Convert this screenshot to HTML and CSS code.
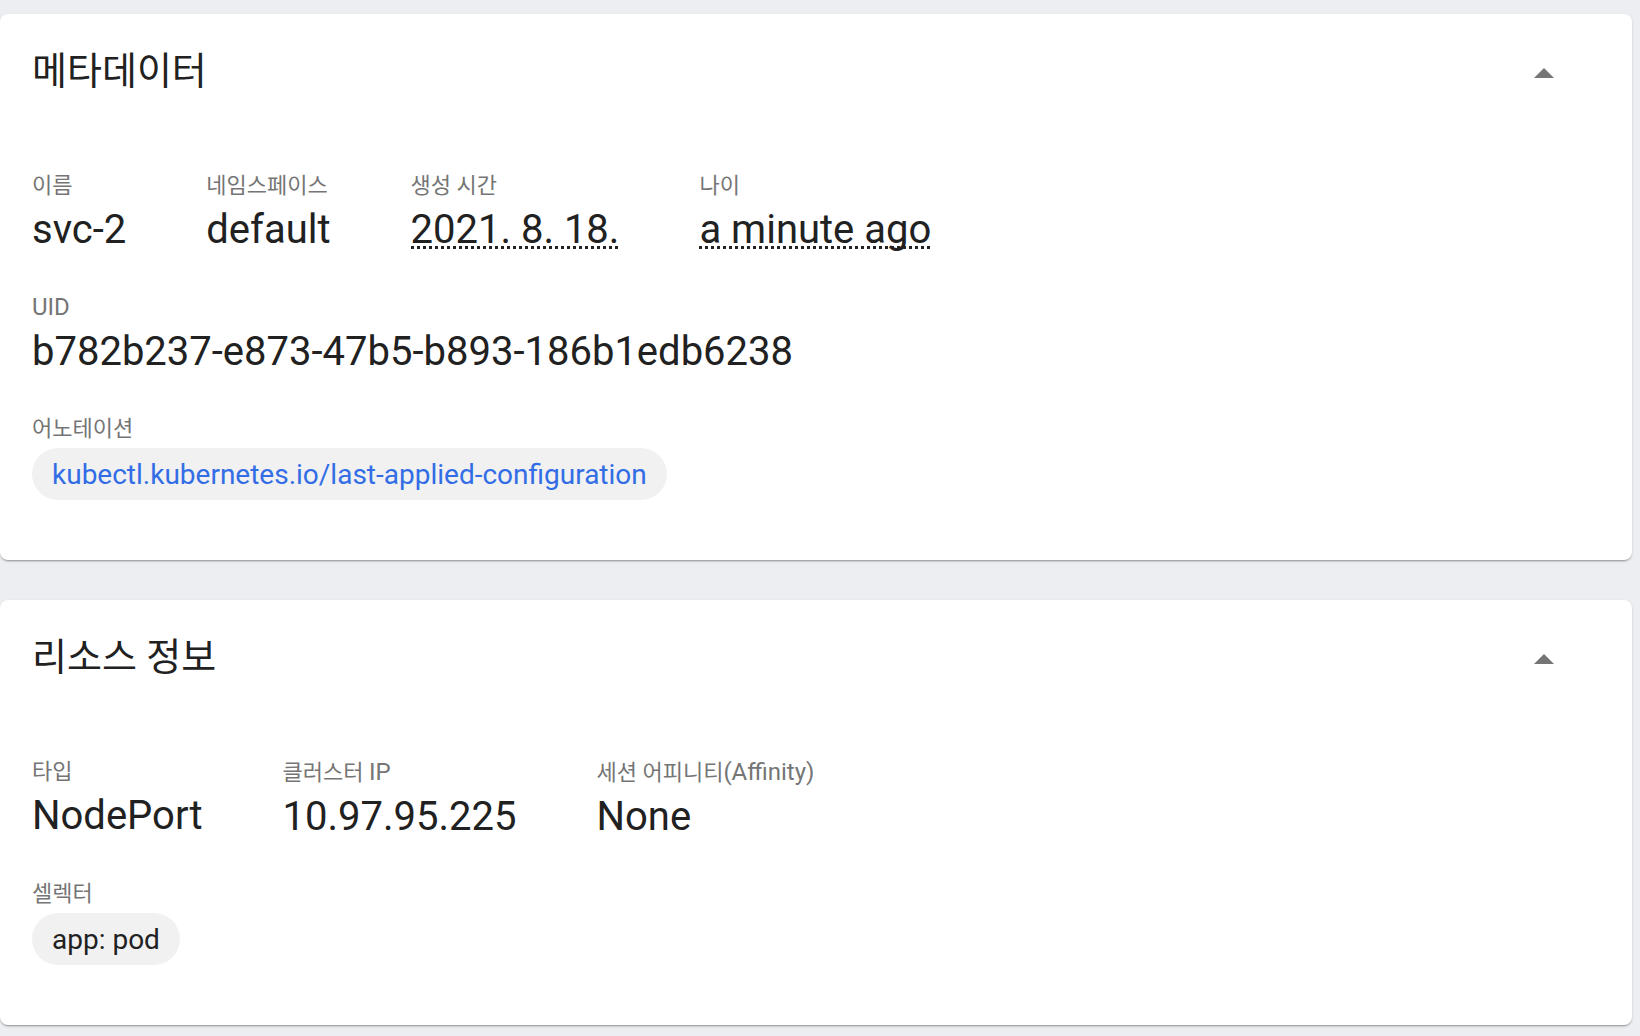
FILE: index.html
```html
<!DOCTYPE html>
<html lang="ko">
<head>
<meta charset="utf-8">
<title>svc-2</title>
<link rel="stylesheet" href="styles.css">
</head>
<body>
<main class="page">
  <section class="card">
    <header class="card-header">
      <h2 class="card-title">메타데이터</h2>
      <button class="toggle" type="button" aria-label="접기">
        <svg viewBox="0 0 24 24" width="48" height="48"><path d="M7 14l5-5 5 5z"/></svg>
      </button>
    </header>
    <div class="card-body">
      <div class="prop-row">
        <div class="prop">
          <div class="label">이름</div>
          <div class="value">svc-2</div>
        </div>
        <div class="prop">
          <div class="label">네임스페이스</div>
          <div class="value">default</div>
        </div>
        <div class="prop">
          <div class="label">생성 시간</div>
          <div class="value"><span class="dotted">2021. 8. 18.</span></div>
        </div>
        <div class="prop">
          <div class="label">나이</div>
          <div class="value"><span class="dotted">a minute ago</span></div>
        </div>
      </div>
      <div class="prop-row">
        <div class="prop">
          <div class="label"><span class="latin">UID</span></div>
          <div class="value">b782b237-e873-47b5-b893-186b1edb6238</div>
        </div>
      </div>
      <div class="prop-row">
        <div class="prop">
          <div class="label">어노테이션</div>
          <div class="chips">
            <span class="chip chip-link">kubectl.kubernetes.io/last-applied-configuration</span>
          </div>
        </div>
      </div>
    </div>
  </section>

  <section class="card">
    <header class="card-header">
      <h2 class="card-title">리소스 정보</h2>
      <button class="toggle" type="button" aria-label="접기">
        <svg viewBox="0 0 24 24" width="48" height="48"><path d="M7 14l5-5 5 5z"/></svg>
      </button>
    </header>
    <div class="card-body">
      <div class="prop-row">
        <div class="prop">
          <div class="label">타입</div>
          <div class="value">NodePort</div>
        </div>
        <div class="prop">
          <div class="label">클러스터 <span class="latin">IP</span></div>
          <div class="value">10.97.95.225</div>
        </div>
        <div class="prop">
          <div class="label">세션 어피니티<span class="latin">(Affinity)</span></div>
          <div class="value">None</div>
        </div>
      </div>
      <div class="prop-row">
        <div class="prop">
          <div class="label">셀렉터</div>
          <div class="chips">
            <span class="chip">app: pod</span>
          </div>
        </div>
      </div>
    </div>
  </section>
</main>
</body>
</html>
```

FILE: styles.css
```css
html, body {
  margin: 0;
  padding: 0;
  background: #eceef1;
  height: 100%;
  overflow: hidden;
}

body {
  font-family: Roboto, "Noto Sans CJK KR", sans-serif;
  color: #212121;
}

.page {
  display: flex;
  flex-direction: column;
  gap: 40px;
  padding: 14px 8px 0 0;
}

.card {
  background: #ffffff;
  border-radius: 8px;
  box-shadow: 0 2px 2px -1px rgba(0, 0, 0, 0.32), 0 1px 3px 0 rgba(0, 0, 0, 0.12);
}

.card-header {
  display: flex;
  align-items: center;
  justify-content: space-between;
  height: 112px;
  padding: 0 64px 0 32px;
}

.card-title {
  margin: 2px 0 0 0;
  font-size: 38px;
  line-height: 44px;
  font-weight: 400;
  color: #212121;
}

.toggle {
  margin: 8px 0 0 0;
  padding: 0;
  border: 0;
  background: none;
  width: 48px;
  height: 48px;
  display: flex;
}

.toggle svg {
  fill: #757575;
}

.card-body {
  display: flex;
  flex-direction: column;
  gap: 40px;
  padding: 47px 32px 60px 32px;
}

.prop-row {
  display: flex;
  gap: 80px;
}

.prop {
  display: flex;
  flex-direction: column;
  align-items: flex-start;
}

.label {
  font-size: 22px;
  line-height: 26px;
  color: #757575;
  margin-bottom: 6px;
  white-space: nowrap;
}

.latin {
  font-size: 24px;
}

.value {
  margin-top: 1px;
  font-size: 40px;
  line-height: 48px;
  color: #212121;
  white-space: nowrap;
}

.dotted {
  background-image: linear-gradient(to right, #222222 50%, transparent 50%);
  background-size: 6px 3px;
  background-repeat: repeat-x;
  background-position: 0 40px;
}

.chips {
  display: flex;
  gap: 12px;
}

.chip {
  display: inline-flex;
  align-items: center;
  height: 52px;
  padding: 0 20px;
  border-radius: 26px;
  background: #f1f1f1;
  font-size: 28px;
  color: #212121;
  white-space: nowrap;
}

.chip-link {
  color: #326de6;
}
```
